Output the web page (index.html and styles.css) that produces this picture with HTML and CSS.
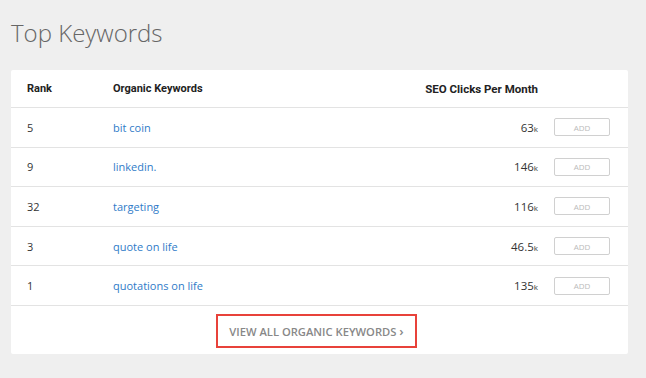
FILE: index.html
```html
<!DOCTYPE html>
<html lang="en">

<head>
    <meta charset="UTF-8">
    <meta name="viewport" content="width=device-width, initial-scale=1.0">
    <title>Top Keywords</title>
    <link rel="stylesheet" href="styles.css">
</head>

<body>

    <h2 class="page-title">Top Keywords</h2>

    <div class="keywords-card">
        <div class="kw-row kw-head">
            <div class="col-rank">Rank</div>
            <div class="col-keyword">Organic Keywords</div>
            <div class="col-clicks">SEO Clicks Per Month</div>
            <div class="col-add"></div>
        </div>

        <div class="kw-row">
            <div class="col-rank">5</div>
            <div class="col-keyword"><a href="#">bit coin</a></div>
            <div class="col-clicks">63<span class="unit">k</span></div>
            <div class="col-add"><button class="add-btn">ADD</button></div>
        </div>
        <div class="kw-row">
            <div class="col-rank">9</div>
            <div class="col-keyword"><a href="#">linkedin.</a></div>
            <div class="col-clicks">146<span class="unit">k</span></div>
            <div class="col-add"><button class="add-btn">ADD</button></div>
        </div>
        <div class="kw-row">
            <div class="col-rank">32</div>
            <div class="col-keyword"><a href="#">targeting</a></div>
            <div class="col-clicks">116<span class="unit">k</span></div>
            <div class="col-add"><button class="add-btn">ADD</button></div>
        </div>
        <div class="kw-row">
            <div class="col-rank">3</div>
            <div class="col-keyword"><a href="#">quote on life</a></div>
            <div class="col-clicks">46.5<span class="unit">k</span></div>
            <div class="col-add"><button class="add-btn">ADD</button></div>
        </div>
        <div class="kw-row">
            <div class="col-rank">1</div>
            <div class="col-keyword"><a href="#">quotations on life</a></div>
            <div class="col-clicks">135<span class="unit">k</span></div>
            <div class="col-add"><button class="add-btn">ADD</button></div>
        </div>

        <div class="card-footer">
            <a href="#" class="view-all">VIEW ALL ORGANIC KEYWORDS <span class="chev">&#8250;</span></a>
        </div>
    </div>

</body>

</html>
```

FILE: styles.css
```css
body {
    background-color: #efefef;
    margin: 0;
    padding: 0 18px 0 11px;
    font-family: 'Open Sans', sans-serif;
    color: #333;
}

.page-title {
    margin: 0;
    padding: 16px 0 20px 0;
    font-size: 24px;
    font-weight: 300;
    line-height: 34px;
    color: #666;
}

.keywords-card {
    background-color: #fff;
    border-radius: 2px;
}

.kw-row {
    display: flex;
    align-items: center;
    height: 38.6px;
    border-bottom: 1px solid #e3e3e3;
    font-size: 11px;
}

.kw-head {
    height: 37px;
    font-family: 'Roboto', sans-serif;
    font-weight: 700;
    font-size: 11px;
    color: #222;
}

.col-rank {
    width: 86px;
    padding-left: 16px;
}

.col-keyword {
    flex-grow: 1;
}

.col-keyword a {
    color: #2f7bc8;
    text-decoration: none;
}

.col-clicks {
    text-align: right;
    font-size: 11.5px;
}

.unit {
    font-size: 8px;
}

.col-add {
    width: 74px;
    padding-left: 16px;
}

.add-btn {
    display: block;
    width: 56px;
    height: 18px;
    padding: 0;
    background-color: #fff;
    border: 1px solid #d0d0d0;
    border-radius: 2px;
    font-family: 'Open Sans', sans-serif;
    font-size: 8px;
    color: #bbb;
    cursor: pointer;
}

.card-footer {
    display: flex;
    justify-content: center;
    padding: 8px 0 6px 0;
}

.view-all {
    display: block;
    margin-right: 6px;
    padding: 0 11px;
    height: 30px;
    line-height: 30px;
    border: 2px solid #e8423a;
    font-size: 11.2px;
    font-weight: 600;
    color: #888;
    text-decoration: none;
}

.chev {
    font-size: 13px;
}
```
